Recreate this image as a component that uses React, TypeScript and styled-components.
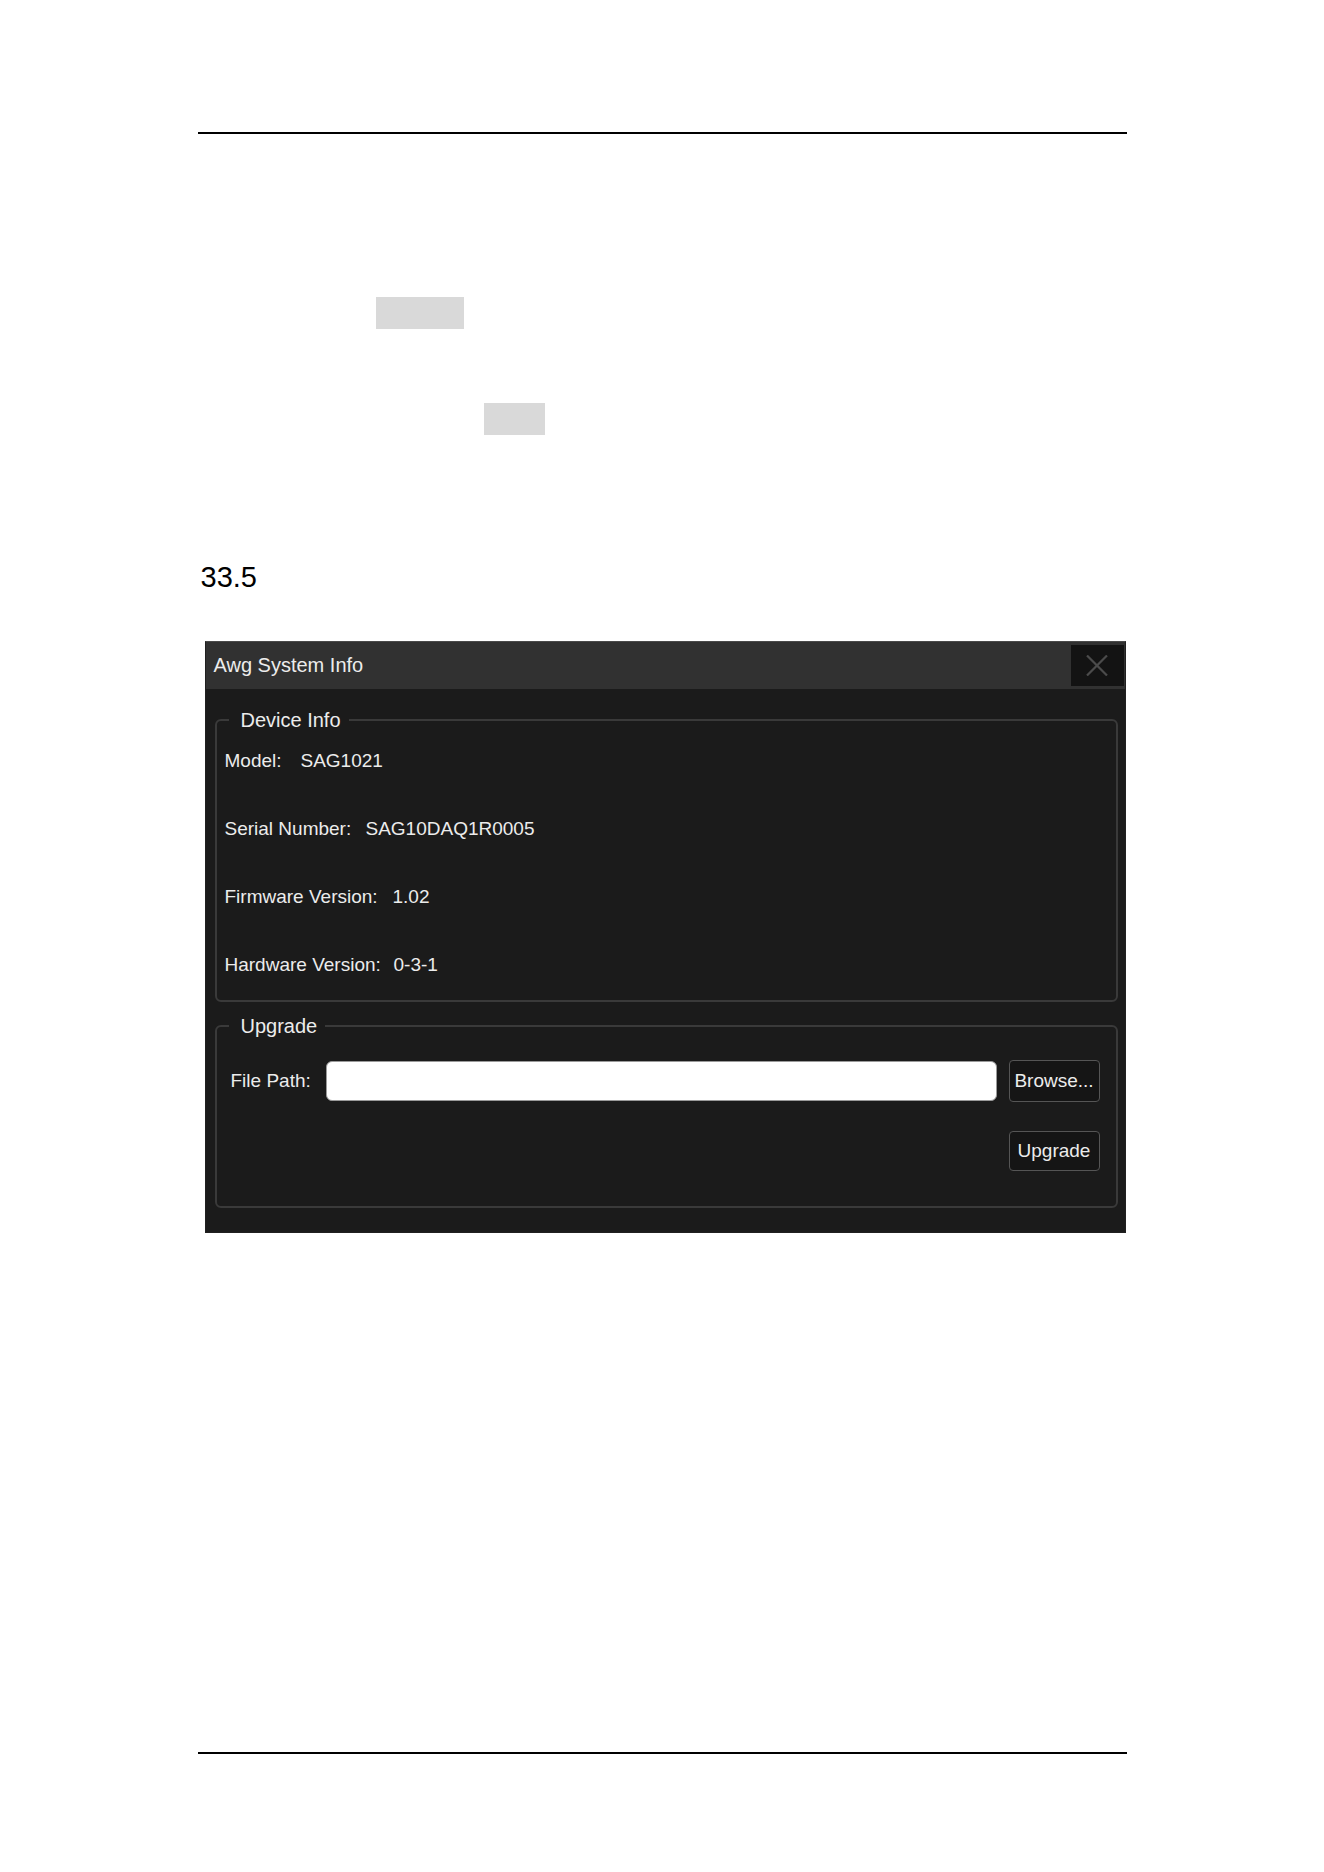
import styled, { createGlobalStyle } from "styled-components";

const GlobalStyle = createGlobalStyle`
  html, body {
    margin: 0;
    padding: 0;
    background: #ffffff;
  }
  body {
    font-family: "Liberation Sans", Arial, sans-serif;
  }
`;

const deviceInfo = [
  { label: "Model:", value: "SAG1021", width: 76 },
  { label: "Serial Number:", value: "SAG10DAQ1R0005", width: 141 },
  { label: "Firmware Version:", value: "1.02", width: 168 },
  { label: "Hardware Version:", value: "0-3-1", width: 169 },
];

function CloseIcon() {
  return (
    <svg width="22" height="21" viewBox="0 0 22 21">
      <path d="M1 0.5 L21 20.5 M21 0.5 L1 20.5" stroke="#4b4b4b" strokeWidth="2.2" fill="none" />
    </svg>
  );
}

export default function App() {
  return (
    <>
      <GlobalStyle />
      <Page>
        <Rule $top={132} $thick={2} />
        <Blank $gap={163} $indent={178} $w={88} />
        <Blank $gap={74} $indent={286} $w={61} />
        <SectionNumber>33.5</SectionNumber>

        <Dialog>
          <TitleBar>
            <Title>Awg System Info</Title>
            <CloseButton>
              <CloseIcon />
            </CloseButton>
          </TitleBar>
          <Body>
            <Group>
              <Legend>Device Info</Legend>
              <InfoList>
                {deviceInfo.map((item) => (
                  <InfoRow key={item.label}>
                    <InfoLabel $w={item.width}>{item.label}</InfoLabel>
                    <span>{item.value}</span>
                  </InfoRow>
                ))}
              </InfoList>
            </Group>
            <Group $spaced>
              <Legend>Upgrade</Legend>
              <UpgradeArea>
                <FileRow>
                  <FileLabel>File Path:</FileLabel>
                  <PathInput type="text" readOnly value="" />
                  <Button $h={42}>Browse...</Button>
                </FileRow>
                <ActionRow>
                  <Button $h={40}>Upgrade</Button>
                </ActionRow>
              </UpgradeArea>
            </Group>
          </Body>
        </Dialog>

        <Rule $top={519} $thick={1.5} />
      </Page>
    </>
  );
}

const Page = styled.div`
  width: 929px;
  margin: 0 auto;
  padding-bottom: 118px;
  display: flex;
  flex-direction: column;
  align-items: flex-start;
`;

const Rule = styled.div<{ $top: number; $thick: number }>`
  align-self: stretch;
  margin-top: ${(p) => p.$top}px;
  height: ${(p) => p.$thick}px;
  background: #000;
`;

const Blank = styled.div<{ $gap: number; $indent: number; $w: number }>`
  margin-top: ${(p) => p.$gap}px;
  margin-left: ${(p) => p.$indent}px;
  width: ${(p) => p.$w}px;
  height: 32px;
  background: #d9d9d9;
`;

const SectionNumber = styled.h2`
  margin: 128px 0 0 3px;
  font-size: 29px;
  line-height: 29px;
  font-weight: 400;
  color: #000;
`;

const Dialog = styled.div`
  margin: 49px 0 0 7px;
  width: 921px;
  height: 592px;
  box-sizing: border-box;
  background: #1b1b1b;
  border: 1px solid #202020;
  border-top-color: #4a4a4a;
  display: flex;
  flex-direction: column;
`;

const TitleBar = styled.div`
  height: 47px;
  flex: none;
  background: #313131;
  display: flex;
  align-items: center;
  justify-content: space-between;
  padding: 0 1px 0 8px;
`;

const Title = styled.span`
  font-size: 20px;
  color: #ececec;
`;

const CloseButton = styled.div`
  width: 53px;
  height: 41px;
  background: #131313;
  display: flex;
  align-items: center;
  justify-content: center;
`;

const Body = styled.div`
  padding: 24px 7px 0 9px;
  display: flex;
  flex-direction: column;
`;

const Group = styled.fieldset<{ $spaced?: boolean }>`
  margin: ${(p) => (p.$spaced ? "17px" : "0")} 0 0 0;
  padding: 0 8px 0 8px;
  border: 2px solid #3a3a3a;
  border-radius: 6px;
  min-width: 0;
`;

const Legend = styled.legend`
  margin-left: 4px;
  padding: 0 8px 0 12px;
  font-size: 20px;
  line-height: 14px;
  color: #ececec;
`;

const InfoList = styled.div`
  padding-bottom: 1px;
`;

const InfoRow = styled.div`
  display: flex;
  height: 68px;
  line-height: 68px;
  font-size: 19px;
  color: #ececec;
  white-space: nowrap;
`;

const InfoLabel = styled.span<{ $w: number }>`
  width: ${(p) => p.$w}px;
  flex: none;
`;

const UpgradeArea = styled.div`
  padding: 27px 8px 35px 6px;
`;

const FileRow = styled.div`
  display: flex;
  align-items: center;
  gap: 12px;
  height: 42px;
`;

const FileLabel = styled.span`
  font-size: 19px;
  color: #ececec;
  width: 83px;
  white-space: nowrap;
`;

const PathInput = styled.input`
  flex: 1;
  height: 40px;
  box-sizing: border-box;
  background: #ffffff;
  border: 1px solid #9a9a9a;
  border-radius: 6px;
  outline: none;
`;

const ActionRow = styled.div`
  margin-top: 29px;
  display: flex;
  justify-content: flex-end;
`;

const Button = styled.button<{ $h: number }>`
  width: 91px;
  height: ${(p) => p.$h}px;
  box-sizing: border-box;
  padding: 0;
  background: #151515;
  border: 1px solid #555555;
  border-radius: 4px;
  color: #ececec;
  font-family: "Liberation Sans", Arial, sans-serif;
  font-size: 19px;
  cursor: pointer;
`;
